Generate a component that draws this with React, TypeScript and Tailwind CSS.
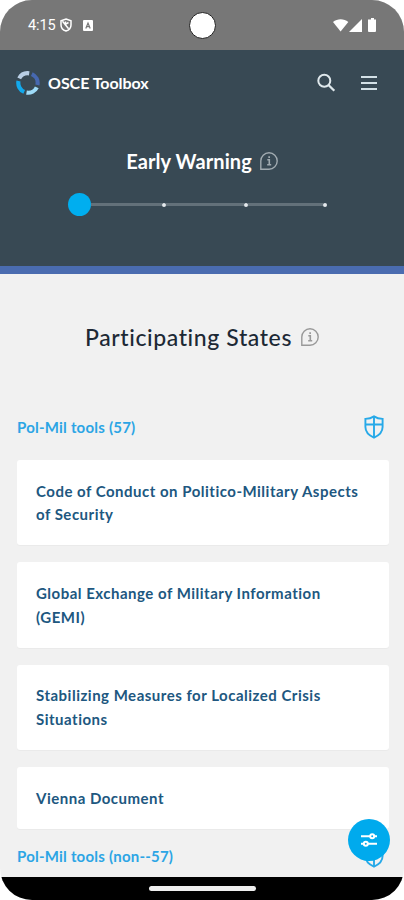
interface Tool {
  id: number;
  name: string;
}

const tools: Tool[] = [
  { id: 1, name: 'Code of Conduct on Politico-Military Aspects of Security' },
  { id: 2, name: 'Global Exchange of Military Information (GEMI)' },
  { id: 3, name: 'Stabilizing Measures for Localized Crisis Situations' },
  { id: 4, name: 'Vienna Document' },
];

function Logo() {
  return (
    <svg className="h-6 w-6" viewBox="0 0 24 24" fill="none" strokeWidth="4.2">
      <path d="M3.2 7.4A9.7 9.7 0 0 1 13.2 2.3" stroke="#b9cfe5" />
      <path d="M15.8 3.1A9.7 9.7 0 0 1 21.4 14" stroke="#4668b0" />
      <path d="M20.8 16.3A9.7 9.7 0 0 1 10.5 21.6" stroke="#9edcf9" />
      <path d="M8.2 20.9A9.7 9.7 0 0 1 2.5 10" stroke="#13a9ec" />
    </svg>
  );
}

function InfoIcon({ className }: { className?: string }) {
  return (
    <svg className={className} viewBox="0 0 18 18" fill="none" stroke="currentColor" strokeWidth="1.4">
      <path d="M.8 17.2V9A8.2 8.2 0 1 1 9 17.2Z" />
      <path d="M7.3 7.8H9.3V12.6M7.2 12.8H11.2M8.3 5.1H10" strokeWidth="1.6" />
    </svg>
  );
}

function ShieldIcon() {
  return (
    <svg className="h-6 w-5" viewBox="0 0 20 24" fill="none" stroke="#27a9e8" strokeWidth="1.9">
      <path d="M10 1.4C7.6 3 4.6 3.8 1.4 3.9V12C1.4 17 5 20.4 10 22.7C15 20.4 18.6 17 18.6 12V3.9C15.4 3.8 12.4 3 10 1.4Z" />
      <path d="M10 1.4V22.7M1.4 9.5H18.6" />
    </svg>
  );
}

function StatusBar() {
  return (
    <div className="relative flex h-[50px] shrink-0 items-center justify-between bg-[#777777] pr-[27px] pl-7 text-white">
      <div className="flex items-center">
        <span className="mt-[2px] w-[27px] font-['Roboto',sans-serif] text-[14.5px] tracking-[-0.1px] whitespace-nowrap">4:15</span>
        <svg className="ml-[5px] h-[14px] w-3" viewBox="0 0 12 14" fill="none" stroke="white" strokeWidth="1.5">
          <path d="M6 1L11 2.8V7C11 10 8.8 12.2 6 13C3.2 12.2 1 10 1 7V2.8Z" />
          <path d="M2.5 3.2L8.6 10.7M5.5 3.5V6.3L8.5 4.5" />
        </svg>
        <svg className="ml-[11px] h-[11px] w-[10px]" viewBox="0 0 10 11">
          <rect width="10" height="11" rx="1" fill="white" />
          <path d="M2.8 8.5L5 3L7.2 8.5M3.7 6.7H6.3" fill="none" stroke="#777777" strokeWidth="1.2" />
        </svg>
      </div>
      <div className="absolute top-3 left-[189px] h-[27px] w-[27px] rounded-full border-[1.5px] border-[#202020] bg-white" />
      <svg className="h-[15px] w-[44px]" viewBox="0 0 44 15" fill="white">
        <path d="M0 4C4.3 .4 11 .4 15.3 4L7.6 13.5Z" />
        <path d="M29 1V14H16Z" />
        <path d="M38 0H41V1.5H43V13Q43 14 42 14H36Q35 14 35 13V1.5H38Z" />
      </svg>
    </div>
  );
}

function Stepper() {
  return (
    <div className="ml-[68px] mt-[18px] flex h-[23px] w-[260px] items-center">
      <div className="h-[23px] w-[23px] shrink-0 rounded-full bg-[#00aeef]" />
      <div className="h-[3px] w-[71px] bg-[#63717a]" />
      <div className="h-1 w-1 rounded-full bg-[#e4e9ec]" />
      <div className="h-[3px] w-[78px] bg-[#63717a]" />
      <div className="h-1 w-1 rounded-full bg-[#e4e9ec]" />
      <div className="h-[3px] w-[75px] bg-[#63717a]" />
      <div className="h-1 w-1 rounded-full bg-[#e4e9ec]" />
    </div>
  );
}

export default function App() {
  return (
    <div className="h-[900px] w-[404px] overflow-hidden bg-white font-['Lato',sans-serif]">
      <div className="relative flex h-full flex-col overflow-hidden rounded-[32px] bg-[#f1f1f1]">
        <StatusBar />

        <header className="h-[224px] shrink-0 border-b-8 border-[#4a6cb0] bg-[#384954] text-white">
          <div className="flex h-[66px] items-center pr-[27px] pl-4">
            <Logo />
            <span className="ml-2 text-base font-bold tracking-[-0.05px]">OSCE Toolbox</span>
            <svg className="ml-auto h-5 w-5" viewBox="0 0 20 20" fill="none" stroke="#dfe8ec" strokeWidth="2">
              <circle cx="8.3" cy="7.7" r="6" />
              <path d="M12.5 12L18.3 17.8" strokeWidth="2.3" />
            </svg>
            <svg className="ml-[25px] h-4 w-4" viewBox="0 0 16 16" stroke="#d3e0e6" strokeWidth="2">
              <path d="M0 2H16M0 8H16M0 14H16" />
            </svg>
          </div>
          <div className="mt-[31px] flex h-7 items-center justify-center">
            <h2 className="text-xl font-bold tracking-[0.1px]">Early Warning</h2>
            <InfoIcon className="ml-2 h-[18px] w-[18px] text-[#a0aab0]" />
          </div>
          <Stepper />
        </header>

        <main className="flex min-h-0 flex-1 flex-col pr-[15px] pl-[17px]">
          <div className="mt-[47px] flex h-8 shrink-0 items-center justify-center pr-[2px]">
            <h1 className="text-[23px] font-medium tracking-[0.6px] text-[#1d2935]">Participating States</h1>
            <InfoIcon className="ml-[9px] h-[18px] w-[18px] text-[#999999]" />
          </div>

          <div className="mt-[62px] flex h-6 shrink-0 items-center justify-between pr-[5px]">
            <h3 className="text-[15px] font-bold tracking-[0.22px] text-[#2ca5e5]">Pol-Mil tools (57)</h3>
            <ShieldIcon />
          </div>

          <div className="mt-[21px] flex shrink-0 flex-col gap-[17px]">
            {tools.map((tool) => (
              <div
                key={tool.id}
                className="rounded-[3px] bg-white px-[19px] pt-[19.5px] pb-[18.5px] text-[15px] leading-[23.7px] font-bold tracking-[0.5px] text-[#20577f] shadow-[0_1px_1px_#00000008]"
              >
                {tool.name}
              </div>
            ))}
          </div>

          <div className="mt-[15px] flex h-6 shrink-0 items-center justify-between pr-[5px]">
            <h3 className="text-[15px] font-bold tracking-[0.22px] text-[#2ca5e5]">Pol-Mil tools (non--57)</h3>
            <ShieldIcon />
          </div>
        </main>

        {/* filter button */}
        <div className="absolute right-[14px] bottom-[39px] flex h-[42px] w-[42px] items-center justify-center rounded-full bg-[#00aaed]">
          <svg className="h-4 w-4" viewBox="0 0 16 16" fill="none" stroke="white" strokeWidth="2">
            <path d="M0 4.2H9M13.5 4.2H16M0 11.8H2.5M7 11.8H16" />
            <circle cx="11.2" cy="4.2" r="2" />
            <circle cx="4.8" cy="11.8" r="2" />
          </svg>
        </div>

        <div className="flex h-[23px] shrink-0 items-center justify-center bg-black">
          <div className="h-[5px] w-[107px] rounded-full bg-[#eeeeee]" />
        </div>
      </div>
    </div>
  );
}
